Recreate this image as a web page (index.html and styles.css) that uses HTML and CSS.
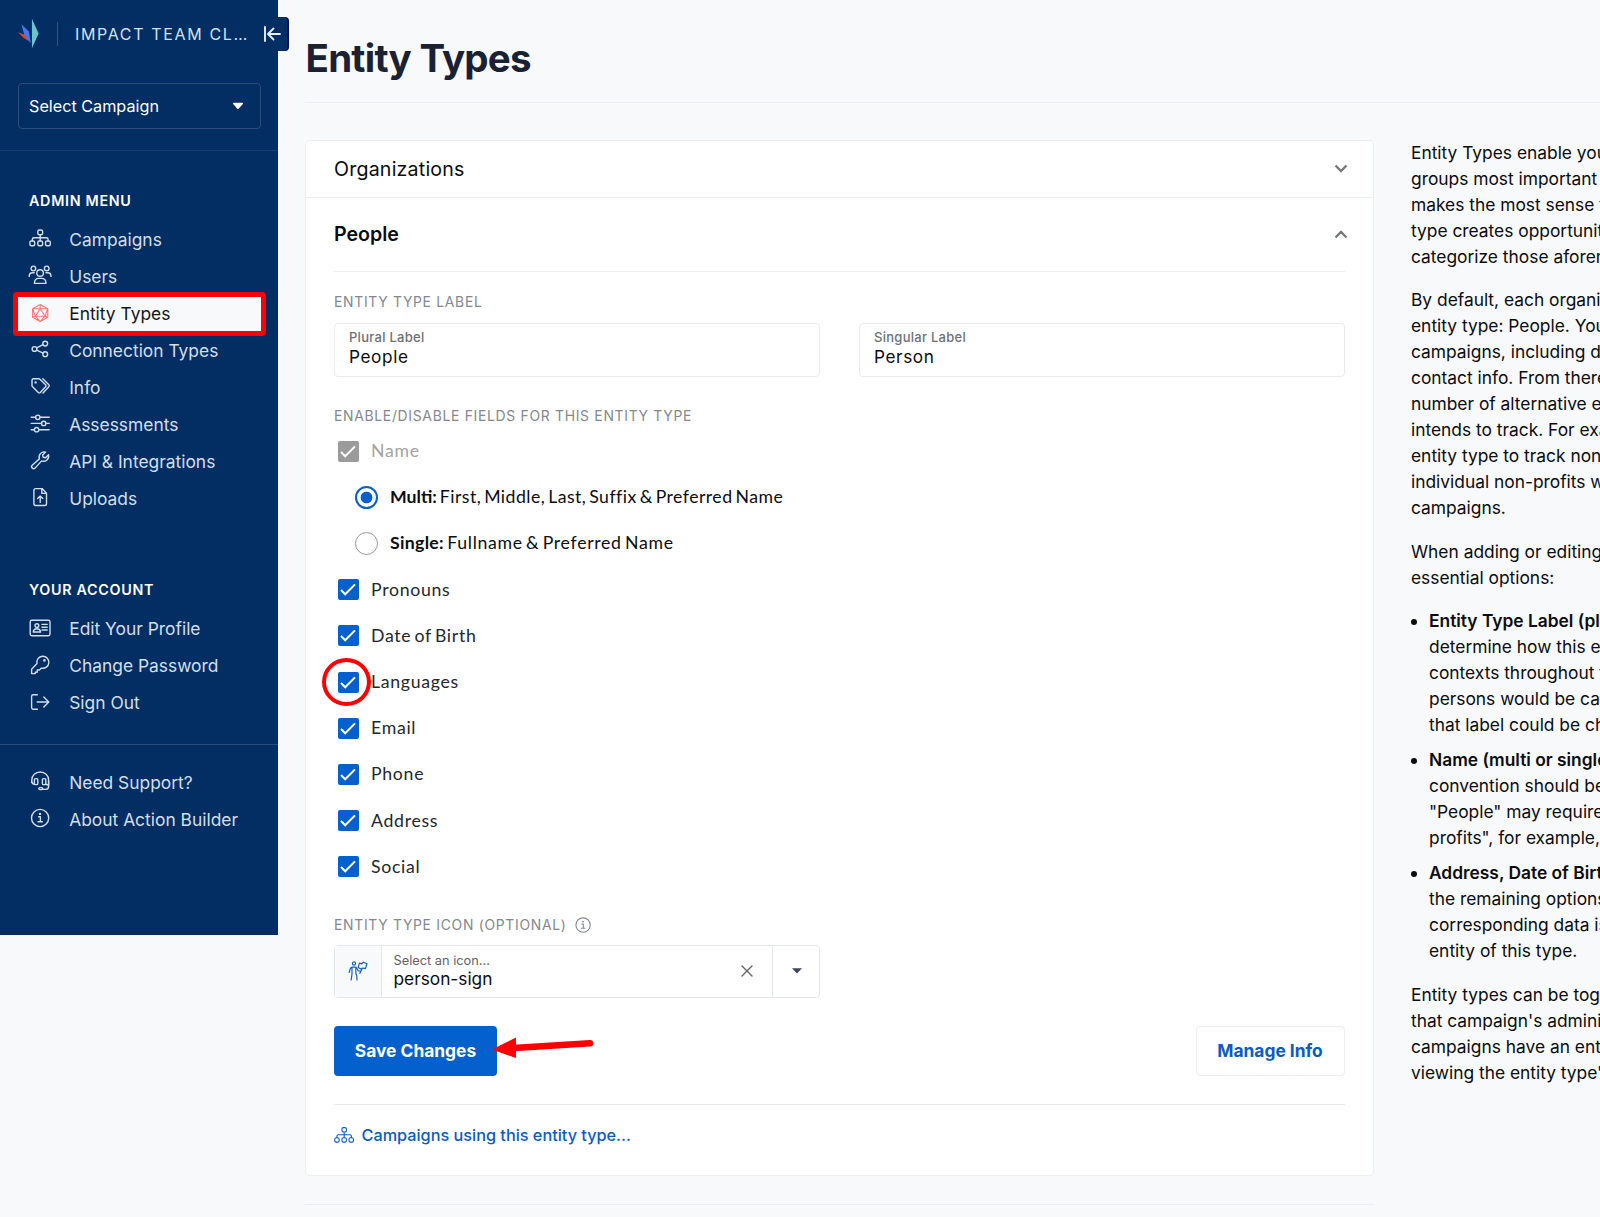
FILE: index.html
```html
<!DOCTYPE html>
<html lang="en">
<head>
<meta charset="utf-8">
<title>Entity Types</title>
<link rel="stylesheet" href="styles.css">
</head>
<body>
<svg class="sprite" aria-hidden="true">
  <symbol id="sitemap" viewBox="0 0 24 24"><rect x="9.8" y="4" width="4.8" height="4.8" rx="1.5"/><rect x="1.9" y="15" width="4.8" height="4.8" rx="1.5"/><rect x="9.8" y="15" width="4.8" height="4.8" rx="1.5"/><rect x="17.5" y="15" width="4.8" height="4.8" rx="1.5"/><path d="M12.2 9v6M4.3 15v-1.6q0-1.6 1.6-1.6h12.6q1.6 0 1.6 1.6V15"/></symbol>
  <symbol id="users" viewBox="0 0 24 24"><circle cx="5.4" cy="5.4" r="2.3"/><circle cx="18.7" cy="5.4" r="2.3"/><circle cx="12.1" cy="10" r="3.3"/><path d="M6.4 20.4q0-5 4.4-5h2.8q4.4 0 4.4 5zM1.2 13.4q0-3.6 3.2-3.6h1.8M23 13.4q0-3.6-3.2-3.6H18"/></symbol>
  <symbol id="d20" viewBox="0 0 24 24"><path d="M12.2 3.6l7.6 4.2v8.5l-7.6 4.2-7.6-4.2V7.8zM12.2 7.6l4.8 7.6H7.4zM12.2 3.6v4M4.6 7.8l7.6-.2 7.6.2M4.6 7.8l2.8 7.4M19.8 7.8L17 15.2M4.6 16.3l2.8-1.1 4.8 5.3 4.8-5.3 2.8 1.1"/></symbol>
  <symbol id="share" viewBox="0 0 24 24"><circle cx="6.5" cy="12" r="2.4"/><circle cx="17.2" cy="6.6" r="2.4"/><circle cx="17.2" cy="17.2" r="2.4"/><path d="M8.7 10.9L15 7.7M8.7 13.1l6.3 3"/></symbol>
  <symbol id="tags" viewBox="0 0 24 24"><path d="M4 6.2q0-1.4 1.4-1.4h5.4q.8 0 1.4.6l5.4 5.4q1 1 0 2l-5.3 5.6q-1 1-2 0l-5.7-5.6q-.6-.6-.6-1.4zM14.8 4.8l6 6q1 1 0 2L15 19"/><circle cx="7.6" cy="8.4" r=".5"/></symbol>
  <symbol id="sliders" viewBox="0 0 24 24"><circle cx="9.8" cy="6.3" r="2.2"/><circle cx="15.7" cy="12.4" r="2.2"/><circle cx="8.6" cy="18.7" r="2.2"/><path d="M3.2 6.3h4.4M12 6.3h9.2M3.2 12.4h10.3M17.9 12.4h3.3M3.2 18.7h3.2M10.8 18.7h10.4"/></symbol>
  <symbol id="wrench" viewBox="0 0 24 24"><path d="M17.6 4.1a5.2 5.2 0 0 0-6.2 6.8L4.2 17.2a2 2 0 0 0 2.9 2.9l6.5-7.2a5.2 5.2 0 0 0 6.9-6.2l-3 3-2.4-.5-.5-2.2z"/></symbol>
  <symbol id="file-up" viewBox="0 0 24 24"><path d="M5.9 5.4q0-1.800 1.800-1.800h6.400l4.400 4.600v10.500q0 1.800-1.800 1.800H7.700q-1.800 0-1.800-1.800zM13.800 3.800v4.600h4.500M12.200 17.400v-6M9.600 13.600l2.600-2.600 2.600 2.600"/></symbol>
  <symbol id="idcard" viewBox="0 0 24 24"><rect x="2.2" y="4.3" width="19.8" height="15.4" rx="1.6"/><circle cx="8.9" cy="9.6" r="1.9"/><path d="M5.2 16q.4-3.2 3.7-3.2t3.7 3.2zM14 8.4h5.2M14 11.2h5.2M14 14h5.2"/></symbol>
  <symbol id="key" viewBox="0 0 24 24"><path d="M9 10.6a6 6 0 1 1 4.5 4.5L11.4 17H9.2v2.2H7.3v1.4H3.6v-4.4z"/><circle cx="16.4" cy="7.4" r=".6"/></symbol>
  <symbol id="signout" viewBox="0 0 24 24"><path d="M9.4 4.8H5.2q-1.6 0-1.6 1.6v11.2q0 1.6 1.6 1.6h4.2M9.2 12h11.6M15.8 7l5 5-5 5"/></symbol>
  <symbol id="headset" viewBox="0 0 24 24"><path d="M3.8 13.4V11a8.4 8 0 0 1 16.8 0v6.6q0 2.8-2.8 2.8h-4.6"/><rect x="6.4" y="9.6" width="3.4" height="6" rx="1.2"/><rect x="14.4" y="9.6" width="3.4" height="6" rx="1.2"/><rect x="10.8" y="18.6" width="4" height="2" rx="1"/><path d="M3.8 13q.4 2 2.6 2.4M20.6 12v4q-2 0-2.8-1"/></symbol>
  <symbol id="info" viewBox="0 0 24 24"><circle cx="12.1" cy="12" r="8.6"/><path d="M10.6 10.8h1.8v5M10 15.8h4.4"/><circle cx="12" cy="7.9" r=".5"/></symbol>
  <symbol id="person-sign" viewBox="0 0 20 20"><circle cx="6" cy="2.500" r="1.600"/><path d="M1.200 11.500l1-3.500Q2.800 6.200 4.400 6.200h2.800q1 0 1.600 1l1.400 2.600 2.400.2M4 6.600v6L3.200 19M7.800 6.800V12l1 3 .2 4M11.800 12.400l2.400-4.800M11.400 2.200l2.200.6 1.800-1.600 3.600 1.600-1.600 4.800-2.600-.6-2 1-2.600-1.600z"/></symbol>
</svg>

<aside class="sidebar">
  <header class="brand">
    <svg class="logo" viewBox="0 0 22 32"><path d="M14.600.5L21.600 16l-7 15.500z" fill="#6cc4cc"/><path d="M3.6 6.2l7.8 7.6 2 12.400-6.400-7.400z" fill="#4379f2"/><path d="M0 14.600l7.200 2.600 4.200 7-5.400-3.600z" fill="#d9472b"/></svg>
    <span class="brand-rule"></span>
    <span class="brand-name">IMPACT TEAM CL…</span>
    <span class="collapse"><svg viewBox="0 0 18 16"><path d="M2 1v14M17 8H5.5M10.5 2.5L5 8l5.500 5.500"/></svg></span>
  </header>
  <div class="campaign-select"><span>Select Campaign</span><svg viewBox="0 0 12 8"><path d="M1.600.8h8.800q1.200.2.500 1.200L6.900 6.600q-.9 1-1.800 0L1.100 2Q.4 1 1.600.8z"/></svg></div>
  <nav class="menu admin">
    <h2>ADMIN MENU</h2>
    <a><svg><use href="#sitemap"/></svg>Campaigns</a>
    <a><svg><use href="#users"/></svg>Users</a>
    <a class="active"><svg><use href="#d20"/></svg>Entity Types</a>
    <a><svg><use href="#share"/></svg>Connection Types</a>
    <a><svg><use href="#tags"/></svg>Info</a>
    <a><svg><use href="#sliders"/></svg>Assessments</a>
    <a><svg><use href="#wrench"/></svg>API &amp; Integrations</a>
    <a><svg><use href="#file-up"/></svg>Uploads</a>
  </nav>
  <nav class="menu account">
    <h2>YOUR ACCOUNT</h2>
    <a><svg><use href="#idcard"/></svg>Edit Your Profile</a>
    <a><svg><use href="#key"/></svg>Change Password</a>
    <a><svg><use href="#signout"/></svg>Sign Out</a>
  </nav>
  <nav class="menu help">
    <a><svg><use href="#headset"/></svg>Need Support?</a>
    <a><svg><use href="#info"/></svg>About Action Builder</a>
  </nav>
</aside>

<main class="main">
  <h1>Entity Types</h1>
  <div class="columns">
    <div class="types">
      <section class="card">
        <div class="row closed"><span>Organizations</span><svg class="chev" viewBox="0 0 14 9"><path d="M1.500 1.500L7 7l5.500-5.500"/></svg></div>
        <div class="panel">
          <div class="row open"><span>People</span><svg class="chev" viewBox="0 0 14 9"><path d="M1.500 7.500L7 2l5.500 5.500"/></svg></div>
          <h3 class="label-title">ENTITY TYPE LABEL</h3>
          <div class="fields">
            <label class="field"><small>Plural Label</small><span>People</span></label>
            <label class="field"><small>Singular Label</small><span>Person</span></label>
          </div>
          <h3 class="enable-title">ENABLE/DISABLE FIELDS FOR THIS ENTITY TYPE</h3>
          <div class="options">
            <label class="opt off"><i class="box"><svg viewBox="0 0 21 21"><path d="M3 11l4.200 4.300L17 5.400"/></svg></i>Name</label>
            <label class="opt radio multi"><i class="dot on"></i><span><b>Multi:</b> First, Middle, Last, Suffix &amp; Preferred Name</span></label>
            <label class="opt radio"><i class="dot"></i><span><b>Single:</b> Fullname &amp; Preferred Name</span></label>
            <label class="opt"><i class="box"><svg viewBox="0 0 21 21"><path d="M3 11l4.200 4.300L17 5.400"/></svg></i>Pronouns</label>
            <label class="opt"><i class="box"><svg viewBox="0 0 21 21"><path d="M3 11l4.200 4.300L17 5.400"/></svg></i>Date of Birth</label>
            <label class="opt marked"><i class="box"><svg viewBox="0 0 21 21"><path d="M3 11l4.200 4.300L17 5.400"/></svg></i>Languages</label>
            <label class="opt"><i class="box"><svg viewBox="0 0 21 21"><path d="M3 11l4.200 4.300L17 5.400"/></svg></i>Email</label>
            <label class="opt"><i class="box"><svg viewBox="0 0 21 21"><path d="M3 11l4.200 4.300L17 5.400"/></svg></i>Phone</label>
            <label class="opt"><i class="box"><svg viewBox="0 0 21 21"><path d="M3 11l4.200 4.300L17 5.400"/></svg></i>Address</label>
            <label class="opt"><i class="box"><svg viewBox="0 0 21 21"><path d="M3 11l4.200 4.300L17 5.400"/></svg></i>Social</label>
          </div>
          <h3 class="icon-title">ENTITY TYPE ICON (OPTIONAL)<svg><use href="#info"/></svg></h3>
          <div class="icon-select">
            <span class="preview"><svg><use href="#person-sign"/></svg></span>
            <span class="value"><small>Select an icon...</small><span>person-sign</span></span>
            <svg class="clear" viewBox="0 0 12 12"><path d="M1 1l10 10M11 1L1 11"/></svg>
            <span class="toggle"><svg viewBox="0 0 10 6"><path d="M0 .3h10L5 5.500z"/></svg></span>
          </div>
          <div class="actions">
            <button class="save">Save Changes<svg class="arrow" viewBox="0 0 104 24"><path d="M22 13L98 8.300" stroke="#f00" stroke-width="6.600" stroke-linecap="round"/><path d="M0 14.500L24 2.500v20.500z" fill="#f00"/></svg></button>
            <button class="manage">Manage Info</button>
          </div>
          <a class="using"><svg><use href="#sitemap"/></svg>Campaigns using this entity type...</a>
        </div>
      </section>
      <hr>
    </div>
    <article class="guide">
      <p>Entity Types enable you<br>groups most important to<br>makes the most sense for<br>type creates opportunities<br>categorize those aforementioned</p>
      <p>By default, each organization<br>entity type: People. You<br>campaigns, including demographic<br>contact info. From there<br>number of alternative entity<br>intends to track. For example<br>entity type to track non-profits<br>individual non-profits within<br>campaigns.</p>
      <p>When adding or editing an<br>essential options:</p>
      <ul>
        <li><b>Entity Type Label (plural</b><br>determine how this entity<br>contexts throughout the<br>persons would be called<br>that label could be changed</li>
        <li><b>Name (multi or single)</b><br>convention should be<br>"People" may require<br>profits", for example, may</li>
        <li><b>Address, Date of Birth</b><br>the remaining options<br>corresponding data is<br>entity of this type.</li>
      </ul>
      <p>Entity types can be toggled<br>that campaign's administration<br>campaigns have an entity<br>viewing the entity type's</p>
    </article>
  </div>
</main>
</body>
</html>
```
FILE: styles.css
```css
*, *::before { box-sizing: border-box; }
body {
  margin: 0;
  width: 1600px;
  height: 1217px;
  overflow: hidden;
  display: flex;
  align-items: flex-start;
  background: #f8f9fb;
  color: #0b0c0e;
  font: 17.36px/26px Inter, "Liberation Sans", sans-serif;
}
svg { display: block; fill: none; stroke: currentColor; stroke-width: 1.4; flex: none; stroke-linejoin: round; stroke-linecap: round; }
.sprite { display: none; }
h1, h2, h3, p, ul { margin: 0; font-weight: inherit; }
button { font: inherit; padding: 0; }
i { font-style: normal; }

/* Sidebar */
.sidebar { width: 277.500px; height: 935.300px; flex: none; background: #022e63; color: #fff; position: relative; z-index: 1; }
.brand { display: flex; align-items: center; height: 68px; padding-left: 18px; position: relative; }
.logo { width: 21px; height: 31px; margin-bottom: 1px; stroke: none; }
.brand-rule { width: 1px; height: 24px; margin: 0 17px 0 18px; background: #34557f; }
.brand-name { font-size: 16px; letter-spacing: 1.640px; color: #d5e0ee; white-space: nowrap; }
.collapse { position: absolute; left: 260px; top: 17px; width: 29px; height: 34px; padding: 9px 0 0 3px; background: #022e63; border-right: 2px solid #00105a; border-radius: 0 4px 4px 0; }
.collapse svg { width: 18px; height: 16px; stroke-width: 1.900; color: #e6ecf4; }
.campaign-select { display: flex; align-items: center; justify-content: space-between; margin: 14.500px 17px 0 17.500px; height: 46.500px; padding: 0 16px 0 10.500px; border: 1px solid #2b4e7b; border-radius: 4px; font-size: 16.200px; }
.campaign-select svg { width: 12px; height: 8px; fill: #fff; stroke: none; }
.admin { margin-top: 20.500px; border-top: 1px solid #173f70; padding-top: 37px; }
.menu h2 { height: 26px; padding-left: 29px; font-size: 14.300px; font-weight: 600; letter-spacing: .700px; }
.menu a { display: flex; align-items: center; gap: 17px; height: 37px; padding-left: 28.200px; font-size: 17.400px; color: #d3deec; }
.menu a svg { width: 24px; height: 24px; margin-bottom: 3px; }
.admin h2, .account h2 { margin-bottom: 7.800px; }
.menu a.active { margin: 0 12px 0 12.500px; padding-left: 10.700px; height: 43.500px; margin-top: -3px; margin-bottom: -3.500px; background: #f8f9fb; color: #14161a; border: 5px solid #f00; border-radius: 4px; }
.menu a.active svg { color: #f87a72; stroke-width: 1.100; margin-bottom: 3px; }
.account { padding-top: 59.500px; }
.help { margin-top: 22.500px; border-top: 1px solid #2a4a79; padding-top: 19px; }

/* Page */
.main { flex: 1; min-width: 0; padding-left: 27.500px; overflow: hidden; }
h1 { height: 103px; padding: 33.500px 0 0 .5px; font-size: 38.500px; line-height: 48px; font-weight: 700; letter-spacing: -.750px; color: #1a2132; border-bottom: 1px solid #eceef1; }
.columns { display: flex; gap: 37.500px; padding-top: 37px; }
.types { width: 1068.500px; flex: none; }
.types hr { margin: 28px 0 0; border: 0; border-top: 1px solid #eceef1; }
.card { height: 1036px; background: #fff; border: 1px solid #eceef2; border-radius: 5px; }
.row { display: flex; justify-content: space-between; align-items: center; font-size: 19.600px; }
.chev { width: 14px; height: 9px; color: #75777b; stroke-width: 2.300; stroke-linecap: butt; stroke-linejoin: miter; }
.closed { height: 56.500px; padding: 0 25px 0 28px; border-bottom: 1px solid #eceef1; letter-spacing: .2px; }
.panel { padding: 0 28px; }
.open { height: 74.500px; font-weight: 600; border-bottom: 1px solid #eceef1; }
.open .chev { margin-right: -3px; }
.panel h3 { font-size: 13.900px; line-height: 20px; letter-spacing: .700px; color: #84888e; }
.label-title { margin-top: 20px; }
.fields { display: grid; grid-template-columns: 1fr 1fr; gap: 39.500px; margin-top: 11px; }
.field { display: flex; flex-direction: column; height: 54px; padding: 4px 14px 0; border: 1px solid #e9ebed; border-radius: 4px; letter-spacing: .6px; }
.field small { font-size: 13px; line-height: 18px; color: #6d7177; font-weight: 500; letter-spacing: .270px; }
.field span { font-size: 17.200px; line-height: 22px; }
.enable-title { margin-top: 29px; }
.options { margin-top: 2px; }
.opt { display: flex; align-items: center; height: 46.200px; padding-left: 4px; gap: 12px; font: 17.700px/22px Lato, sans-serif; letter-spacing: .700px; word-spacing: -2px; color: #25272a; position: relative; }
.opt b { font-weight: 700; color: #0c0d0f; letter-spacing: .3px; }
.radio { padding-left: 21px; color: #0c0d0f; }
.multi { letter-spacing: .450px; }
.multi b { letter-spacing: 0; }
.off { color: #a3a3a3; }
.box { width: 21px; height: 21px; border-radius: 2px; background: #0460cc; color: #fff; }
.off .box { background: #9b9b9b; }
.box svg { width: 21px; height: 21px; stroke-width: 2; stroke-linecap: butt; stroke-linejoin: miter; }
.dot { width: 23px; height: 23px; border: 1.300px solid #999; border-radius: 50%; }
.dot.on { border: 2px solid #0460cc; background: radial-gradient(circle, #0460cc 5.500px, #fff 6.200px); }
.marked::before { content: ""; position: absolute; left: -12px; top: -1px; width: 49px; height: 48px; border: 4.500px solid #f00; border-radius: 50%; }
.panel .icon-title { display: flex; align-items: center; gap: 6px; margin-top: 25px; }
.icon-title svg { width: 20px; height: 20px; stroke-width: 1.300; }
.icon-select { display: flex; align-items: center; width: 485.500px; height: 53px; margin-top: 10px; border: 1px solid #e4e7eb; border-radius: 4px; }
.preview { display: grid; place-items: center; width: 47px; height: 51px; background: #f8f9fb; border-right: 1px solid #e4e7eb; color: #1660bd; }
.preview svg { width: 20px; height: 20px; stroke-width: 1.200; }
.value { flex: 1; display: flex; flex-direction: column; padding: 0 0 2px 11.500px; font-size: 17.300px; line-height: 19px; }
.value small { font-size: 12.800px; line-height: 17px; color: #5f6368; }
.clear { width: 12px; height: 12px; margin-right: 19px; color: #666; }
.toggle { display: grid; place-items: center; width: 47px; height: 51px; border-left: 1px solid #e4e7eb; padding-left: 2px; }
.toggle svg { width: 10px; height: 6px; fill: #40455c; stroke: none; }
.actions { display: flex; justify-content: space-between; padding: 28px 0; border-bottom: 1px solid #e8ebee; font-weight: 700; }
.actions button { height: 50px; border-radius: 4px; font-size: 17.360px; padding-top: 1px; }
.save { position: relative; width: 163px; border: 0; background: #0460cc; color: #fff; }
.arrow { position: absolute; left: 158px; top: 9.500px; width: 104px; height: 24px; stroke: none; }
.actions .manage { width: 149px; border: 1px solid #eceef0; background: #fff; color: #0a5bc6; font-weight: 650; }
.using { display: flex; align-items: center; gap: 7px; height: 61px; margin-left: -1.500px; color: #0a5bc6; font-size: 16.250px; font-weight: 500; }
.using svg { width: 22px; height: 22px; stroke-width: 1.200; }

/* Help text */
.guide { width: 400px; flex: none; white-space: nowrap; }
.guide p { margin-bottom: 17.300px; }
.guide ul { padding: 0 0 0 18px; margin-bottom: 17.300px; }
.guide li { margin-bottom: 9.200px; }
.guide li:last-child { margin-bottom: 0; }
.guide b { font-weight: 600; }
```
